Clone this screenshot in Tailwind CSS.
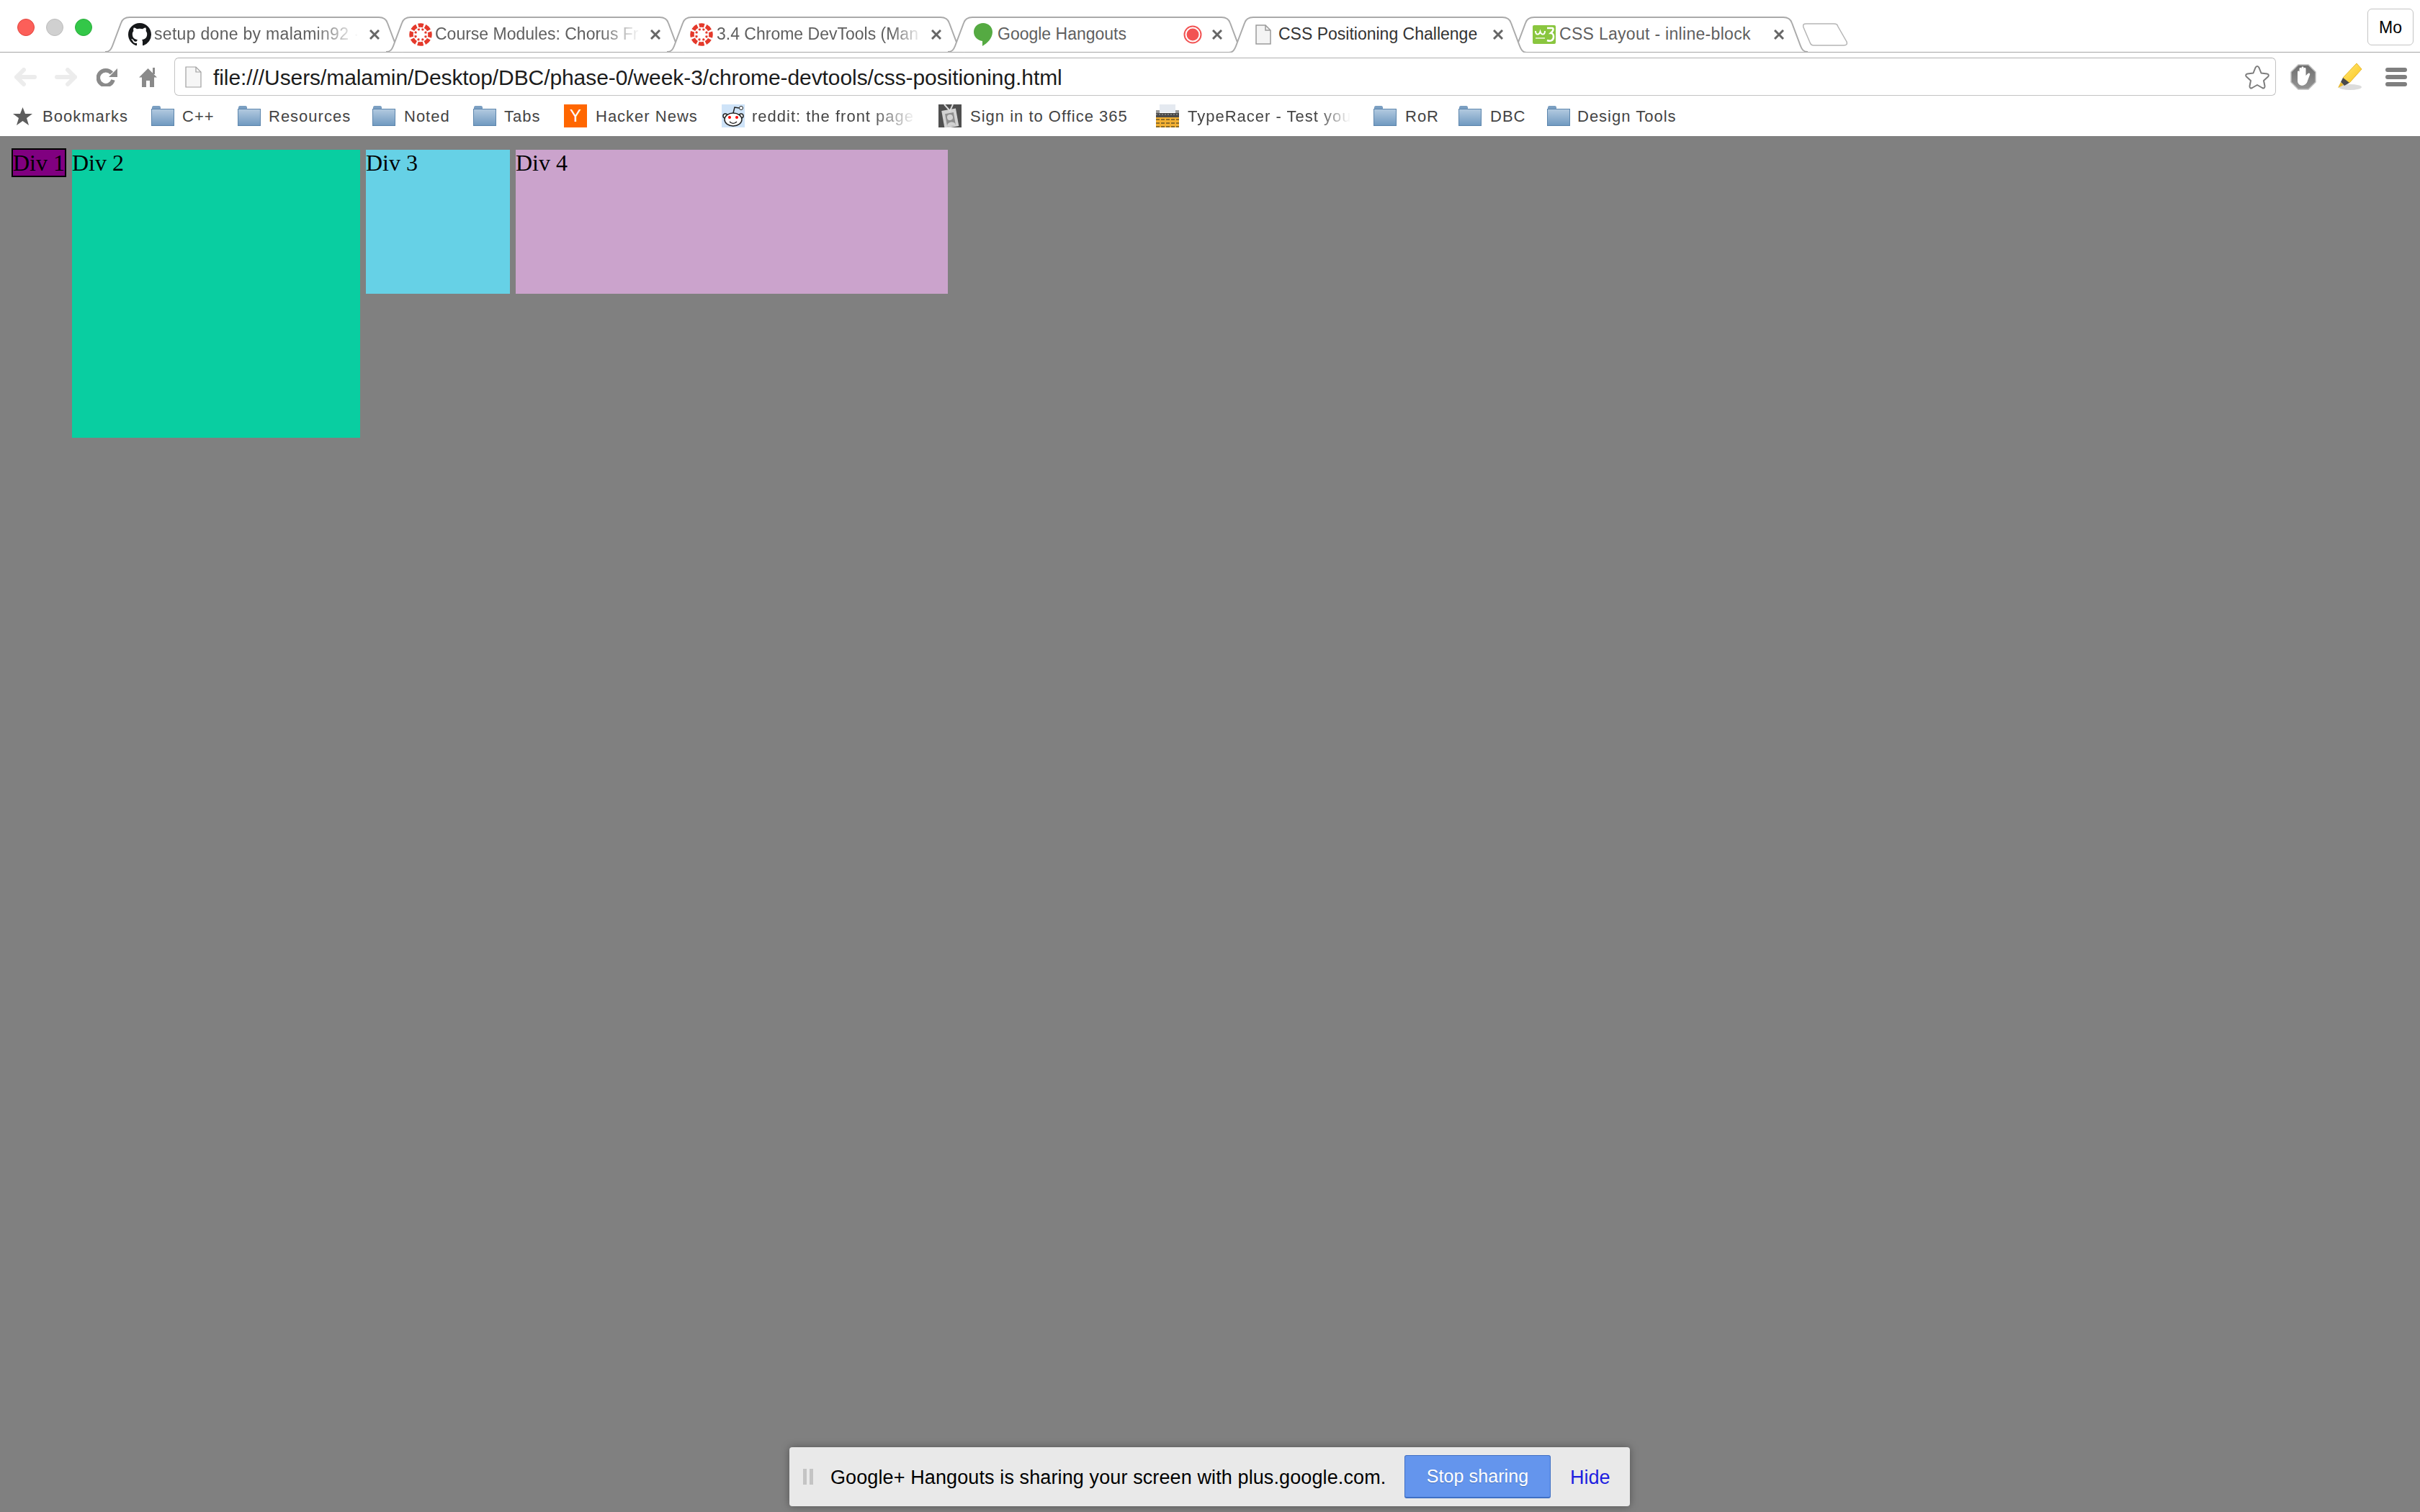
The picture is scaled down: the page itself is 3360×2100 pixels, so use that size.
<!DOCTYPE html>
<html lang="en">
<head>
  <meta charset="UTF-8" />
  <title>CSS Positioning Challenge</title>
  <script src="https://cdn.jsdelivr.net/npm/@tailwindcss/browser@4"></script>
</head>
<body class="bg-[#808080] w-[3360px] h-[2100px] overflow-hidden relative font-['Liberation_Sans',sans-serif]">

  <svg width="0" height="0" class="absolute">
    <defs>
      <linearGradient id="folder" x1="0" y1="0" x2="0" y2="1"><stop offset="0" stop-color="#b3cae0"/><stop offset="1" stop-color="#6f99c0"/></linearGradient>
      <linearGradient id="shield" x1="0" y1="0" x2="0" y2="1"><stop offset="0" stop-color="#6e6e6e"/><stop offset="1" stop-color="#959595"/></linearGradient>
      <linearGradient id="marker" x1="0" y1="0" x2="1" y2="1"><stop offset="0" stop-color="#ffe873"/><stop offset="1" stop-color="#fbc51f"/></linearGradient>
    </defs>
  </svg>

  <!-- tab strip -->
  <header class="h-[73px] bg-white border-b border-[#a6a6a6] flex relative">
    <div class="absolute left-[24px] top-[26px] flex gap-[16px]">
      <span class="size-[24px] rounded-full bg-[#fc5f59] border border-[#e2463f]"></span>
      <span class="size-[24px] rounded-full bg-[#d0d0d0] border border-[#bcbcbc]"></span>
      <span class="size-[24px] rounded-full bg-[#33c748] border border-[#2aac3c]"></span>
    </div>

    <div class="flex pl-[146px] pt-[23px] h-[73px] text-[23px] text-[#5f5f5f]">
      <!-- tab 1 -->
      <div class="relative w-[414px] h-[50px] -mr-[24px]">
        <svg class="absolute inset-0" width="414" height="50" fill="white" stroke="#aaa" stroke-width="2"><path d="M0 49C6 49 8 46 10 41L22 9C24 3 28 1 34 1H380C386 1 390 3 392 9L404 41C406 46 408 49 414 49"/></svg>
        <div class="relative flex items-center h-[49px] pl-[32px] pr-[33px]">
          <svg class="w-[32px] h-[32px] shrink-0" viewBox="0 0 16 16" fill="#16181a"><path d="M8 0C3.58 0 0 3.58 0 8c0 3.54 2.29 6.53 5.47 7.59.4.07.55-.17.55-.38v-1.34c-2.23.48-2.7-1.07-2.7-1.07-.36-.92-.89-1.17-.89-1.17-.73-.5.05-.49.05-.49.8.06 1.23.82 1.23.82.71 1.22 1.87.87 2.33.66.07-.52.28-.87.5-1.07-1.78-.2-3.64-.89-3.64-3.95 0-.87.31-1.59.82-2.15-.08-.2-.36-1.02.08-2.12 0 0 .67-.21 2.2.82A7.7 7.7 0 0 1 8 3.87c.68 0 1.36.09 2 .27 1.53-1.04 2.2-.82 2.2-.82.44 1.1.16 1.92.08 2.12.51.56.82 1.27.82 2.15 0 3.07-1.87 3.75-3.65 3.95.29.25.54.73.54 1.48v2.19c0 .21.15.46.55.38A8 8 0 0 0 16 8c0-4.42-3.58-8-8-8z"/></svg>
          <span class="ml-[4px] w-[284px] tracking-[0.3px] whitespace-nowrap overflow-hidden [mask-image:linear-gradient(to_right,black_78%,transparent)]">setup done by malamin92 · Pull</span>
          <svg class="ml-auto shrink-0" width="14" height="14" stroke="#666" stroke-width="3"><path d="M1 1L13 13M13 1L1 13"/></svg>
        </div>
      </div>
      <!-- tab 2 -->
      <div class="relative w-[414px] h-[50px] -mr-[24px]">
        <svg class="absolute inset-0" width="414" height="50" fill="white" stroke="#aaa" stroke-width="2"><path d="M0 49C6 49 8 46 10 41L22 9C24 3 28 1 34 1H380C386 1 390 3 392 9L404 41C406 46 408 49 414 49"/></svg>
        <div class="relative flex items-center h-[49px] pl-[32px] pr-[33px]">
          <svg class="w-[32px] h-[32px] shrink-0 -rotate-90" viewBox="0 0 32 32" fill="none" stroke="#e4392b"><circle cx="16" cy="16" r="13" stroke-width="5.500" stroke-dasharray="7.700 2.510" stroke-dashoffset="3.850"/><circle cx="16" cy="16" r="7.500" stroke-width="3" stroke-dasharray="2.800 3.090" stroke-dashoffset="-1.500"/></svg>
          <span class="ml-[4px] w-[286px] whitespace-nowrap overflow-hidden [mask-image:linear-gradient(to_right,black_80%,transparent)]">Course Modules: Chorus Fr</span>
          <svg class="ml-auto shrink-0" width="14" height="14" stroke="#666" stroke-width="3"><path d="M1 1L13 13M13 1L1 13"/></svg>
        </div>
      </div>
      <!-- tab 3 -->
      <div class="relative w-[414px] h-[50px] -mr-[24px]">
        <svg class="absolute inset-0" width="414" height="50" fill="white" stroke="#aaa" stroke-width="2"><path d="M0 49C6 49 8 46 10 41L22 9C24 3 28 1 34 1H380C386 1 390 3 392 9L404 41C406 46 408 49 414 49"/></svg>
        <div class="relative flex items-center h-[49px] pl-[32px] pr-[33px]">
          <svg class="w-[32px] h-[32px] shrink-0 -rotate-90" viewBox="0 0 32 32" fill="none" stroke="#e4392b"><circle cx="16" cy="16" r="13" stroke-width="5.500" stroke-dasharray="7.700 2.510" stroke-dashoffset="3.850"/><circle cx="16" cy="16" r="7.500" stroke-width="3" stroke-dasharray="2.800 3.090" stroke-dashoffset="-1.500"/></svg>
          <span class="ml-[5px] w-[286px] whitespace-nowrap overflow-hidden [mask-image:linear-gradient(to_right,black_85%,transparent)]">3.4 Chrome DevTools (Man</span>
          <svg class="ml-auto shrink-0" width="14" height="14" stroke="#666" stroke-width="3"><path d="M1 1L13 13M13 1L1 13"/></svg>
        </div>
      </div>
      <!-- tab 4 -->
      <div class="relative w-[414px] h-[50px] -mr-[24px]">
        <svg class="absolute inset-0" width="414" height="50" fill="white" stroke="#aaa" stroke-width="2"><path d="M0 49C6 49 8 46 10 41L22 9C24 3 28 1 34 1H380C386 1 390 3 392 9L404 41C406 46 408 49 414 49"/></svg>
        <div class="relative flex items-center h-[49px] pl-[36px] pr-[33px]">
          <svg class="w-[26px] h-[32px] shrink-0" viewBox="0 0 26 32" fill="#55aa42"><path d="M13 0C6 0 0 5 0 12.500C0 19 5 24 12 25V32C19 28 26 21 26 12.500C26 5 20 0 13 0Z"/></svg>
          <span class="ml-[7px] whitespace-nowrap">Google Hangouts</span>
          <svg class="ml-auto shrink-0" width="26" height="26"><circle cx="13" cy="13" r="11.500" fill="white" stroke="#f25353" stroke-width="2"/><circle cx="13" cy="13" r="8.500" fill="#f25353"/></svg>
          <svg class="ml-[14px] shrink-0" width="14" height="14" stroke="#666" stroke-width="3"><path d="M1 1L13 13M13 1L1 13"/></svg>
        </div>
      </div>
      <!-- tab 5, active -->
      <div class="relative z-10 w-[414px] h-[50px] -mr-[24px]">
        <svg class="absolute inset-0" width="414" height="50" fill="white" stroke="#aaa" stroke-width="2"><path d="M0 50C6 50 8 46 10 41L22 9C24 3 28 1 34 1H380C386 1 390 3 392 9L404 41C406 46 408 50 414 50"/></svg>
        <div class="relative flex items-center h-[49px] pl-[37px] pr-[33px] text-[#333]">
          <svg class="shrink-0" width="22" height="28" viewBox="0 0 22 28" fill="#f4f4f4" stroke="#9a9a9a" stroke-width="1.500"><path d="M1 1H14L21 8V27H1Z"/><path d="M14 1V8H21" fill="none"/></svg>
          <span class="ml-[10px] whitespace-nowrap">CSS Positioning Challenge</span>
          <svg class="ml-auto shrink-0" width="14" height="14" stroke="#666" stroke-width="3"><path d="M1 1L13 13M13 1L1 13"/></svg>
        </div>
      </div>
      <!-- tab 6 -->
      <div class="relative w-[414px] h-[50px]">
        <svg class="absolute inset-0" width="414" height="50" fill="white" stroke="#aaa" stroke-width="2"><path d="M0 49C6 49 8 46 10 41L22 9C24 3 28 1 34 1H380C386 1 390 3 392 9L404 41C406 46 408 49 414 49"/></svg>
        <div class="relative flex items-center h-[49px] pl-[32px] pr-[33px]">
          <svg class="shrink-0" width="32" height="26" viewBox="0 0 32 26"><rect width="32" height="26" rx="2" fill="#8ac63f"/><path d="M4 8C4 14 9 14 10.500 9C12 14 17 14 17 8" fill="none" stroke="white" stroke-width="2"/><path d="M20 4H27C29 4 29 7 27 9L25 11C28 11 29 14 29 16C29 21 25 23 20 21" fill="none" stroke="white" stroke-width="2.500"/><rect x="4" y="17" width="13" height="2" fill="#d6ecb6"/></svg>
          <span class="ml-[5px] tracking-[0.3px] whitespace-nowrap">CSS Layout - inline-block</span>
          <svg class="ml-auto shrink-0" width="14" height="14" stroke="#666" stroke-width="3"><path d="M1 1L13 13M13 1L1 13"/></svg>
        </div>
      </div>
      <!-- new tab button -->
      <svg class="-ml-[8px] mt-[9px] shrink-0" width="64" height="32" fill="white" stroke="#b5b5b5" stroke-width="1.500"><path d="M6 1H44C48 1 49 2 50 5L62 26C63 29 62 31 58 31H16C13 31 12 30 11 27L2 6C1 2 2 1 6 1Z"/></svg>
    </div>

    <div class="absolute left-[3287px] top-[12px] w-[64px] h-[51px] pt-[2px] bg-white border border-[#c4c4c4] rounded-[6px] flex items-center justify-center text-[23px] text-black">Mo</div>
  </header>

  <!-- toolbar -->
  <div class="h-[60px] bg-white flex items-center relative">
    <svg class="ml-[20px] mt-[8px] shrink-0" width="31" height="26" viewBox="0 0 31 26" fill="none" stroke="#ececec" stroke-width="6" stroke-linecap="round" stroke-linejoin="round"><path d="M13 3L3 13L13 23M3 13H28"/></svg>
    <svg class="ml-[25px] mt-[8px] shrink-0" width="31" height="26" viewBox="0 0 31 26" fill="none" stroke="#ececec" stroke-width="6" stroke-linecap="round" stroke-linejoin="round"><path d="M18 3L28 13L18 23M28 13H3"/></svg>
    <svg class="ml-[27px] mt-[8px] shrink-0" width="29" height="26" viewBox="0 0 29 26" fill="none"><path d="M21 7.500A10.500 10.500 0 1 0 23 17" stroke="#8a8a8a" stroke-width="5.500"/><path d="M29 1V13H17Z" fill="#8a8a8a"/></svg>
    <svg class="ml-[30px] mt-[8px] shrink-0" width="25" height="27" viewBox="0 0 25 27" fill="#8a8a8a"><path d="M12.500 1L25 13.500H21V27H15V18H10V27H4V13.500H0Z"/><rect x="19" y="0" width="3" height="9"/></svg>
    <!-- omnibox -->
    <div class="ml-[24px] w-[2918px] h-[53px] mt-[7px] border border-[#c4c4c4] border-t-[#b0b0b0] rounded-[6px] flex items-center pl-[14px] pr-[7px]">
      <svg class="shrink-0" width="23" height="30" viewBox="0 0 23 30" fill="#f6f6f6" stroke="#a0a0a0" stroke-width="1.200"><path d="M1 1H15L22 8V29H1Z"/><path d="M15 1V8H22" fill="none"/></svg>
      <span class="ml-[16px] pt-[1px] text-[30px] tracking-[-0.08px] text-[#1c1c1c] whitespace-nowrap">file:///Users/malamin/Desktop/DBC/phase-0/week-3/chrome-devtools/css-positioning.html</span>
      <svg class="ml-auto shrink-0" width="36" height="34" viewBox="0 0 36 34" fill="white" stroke="#7c7c7c" stroke-width="2" stroke-linejoin="round"><path d="M18 2C19 2 20 3 20.500 4L23.500 11.500L31.500 12.500C34 13 34.500 15 33 16.500L27 22L28.500 29.500C29 32 27 33 25 32L18 28L11 32C9 33 7 32 7.500 29.500L9 22L3 16.500C1.500 15 2 13 4.500 12.500L12.500 11.500L15.500 4C16 3 17 2 18 2Z"/></svg>
    </div>
    <svg class="ml-[20px] mt-[8px] shrink-0" width="36" height="36" viewBox="0 0 36 36"><path d="M11 1H25L35 11V25L25 35H11L1 25V11Z" fill="url(#shield)" stroke="#bdbdbd" stroke-width="1.500"/><path d="M10 18V11C10 9 12.500 9 12.500 11V6.500C12.500 4.500 15.500 4.500 15.500 6.500V5C15.500 3 18.500 3 18.500 5V6.500C18.500 4.500 21.500 4.500 21.500 6.500V16L24.500 13C26 11.500 28 13 27 15L24 23C22 32 10 32 10 23Z" fill="white"/></svg>
    <svg class="ml-[28px] mt-[8px] shrink-0" width="36" height="38" viewBox="0 0 36 38"><ellipse cx="19" cy="33" rx="16" ry="4" fill="#dcdcdc"/><path d="M28 0L35 8L18 27L9 20Z" fill="url(#marker)" stroke="#e8b82a"/><path d="M9 20L18 27L11 31L6 26Z" fill="#4a4a4a"/><path d="M6 26L10 30L2 34Z" fill="#e8b82a"/></svg>
    <div class="ml-[32px] mt-[8px] flex flex-col gap-[4px]">
      <span class="block w-[30px] h-[6px] rounded-full bg-[#7f7f7f]"></span>
      <span class="block w-[30px] h-[6px] rounded-full bg-[#7f7f7f]"></span>
      <span class="block w-[30px] h-[6px] rounded-full bg-[#7f7f7f]"></span>
    </div>
  </div>

  <!-- bookmarks bar -->
  <nav class="h-[56px] bg-white flex items-center pl-[18px] text-[22px] text-[#444] whitespace-nowrap tracking-[1px]">
    <svg class="shrink-0" width="27" height="25" viewBox="0 0 27 25" fill="#5d5d5d"><path d="M13.500 0L17 9H27L19 15L22 25L13.500 19L5 25L8 15L0 9H10Z"/></svg>
    <span class="ml-[14px] w-[117px]">Bookmarks</span>

    <svg class="ml-[34px] shrink-0" width="32" height="28" viewBox="0 0 32 28"><path d="M1 4V2C1 1 2 0 3 0H11C12 0 13 1 13 2V4H31C32 4 32 5 32 5V27H0V5C0 5 0 4 1 4Z" fill="#7b9fc2"/><rect x="0.500" y="4.500" width="31" height="23" fill="url(#folder)" stroke="#5d86ad"/></svg>
    <span class="ml-[11px] w-[44px]">C++</span>

    <svg class="ml-[33px] shrink-0" width="32" height="28" viewBox="0 0 32 28"><path d="M1 4V2C1 1 2 0 3 0H11C12 0 13 1 13 2V4H31C32 4 32 5 32 5V27H0V5C0 5 0 4 1 4Z" fill="#7b9fc2"/><rect x="0.500" y="4.500" width="31" height="23" fill="url(#folder)" stroke="#5d86ad"/></svg>
    <span class="ml-[11px] w-[111px]">Resources</span>

    <svg class="ml-[33px] shrink-0" width="32" height="28" viewBox="0 0 32 28"><path d="M1 4V2C1 1 2 0 3 0H11C12 0 13 1 13 2V4H31C32 4 32 5 32 5V27H0V5C0 5 0 4 1 4Z" fill="#7b9fc2"/><rect x="0.500" y="4.500" width="31" height="23" fill="url(#folder)" stroke="#5d86ad"/></svg>
    <span class="ml-[12px] w-[63px]">Noted</span>

    <svg class="ml-[33px] shrink-0" width="32" height="28" viewBox="0 0 32 28"><path d="M1 4V2C1 1 2 0 3 0H11C12 0 13 1 13 2V4H31C32 4 32 5 32 5V27H0V5C0 5 0 4 1 4Z" fill="#7b9fc2"/><rect x="0.500" y="4.500" width="31" height="23" fill="url(#folder)" stroke="#5d86ad"/></svg>
    <span class="ml-[11px] w-[51px]">Tabs</span>

    <span class="ml-[32px] shrink-0 w-[32px] h-[32px] bg-[#ff6600] text-white text-[24px] tracking-normal flex items-center justify-center">Y</span>
    <span class="ml-[12px] w-[140px]">Hacker News</span>

    <svg class="ml-[35px] shrink-0" width="32" height="32" viewBox="0 0 32 32"><rect width="32" height="32" fill="#cee3f8"/><circle cx="5" cy="16" r="3" fill="white" stroke="#222" stroke-width="1.500"/><circle cx="27" cy="16" r="3" fill="white" stroke="#222" stroke-width="1.500"/><ellipse cx="16" cy="21" rx="12" ry="9" fill="white" stroke="#222" stroke-width="1.500"/><circle cx="11" cy="18" r="2" fill="#f00"/><circle cx="21" cy="18" r="2" fill="#f00"/><path d="M11 24C14 27 18 27 21 24" fill="none" stroke="#222" stroke-width="1.500"/><path d="M16 12L18 4L24 5" fill="none" stroke="#222" stroke-width="1.500"/><circle cx="27" cy="5" r="2.500" fill="white" stroke="#222"/></svg>
    <span class="ml-[10px] w-[229px] overflow-hidden [mask-image:linear-gradient(to_right,black_72%,transparent)]">reddit: the front page of the</span>

    <svg class="ml-[30px] shrink-0" width="32" height="32" viewBox="0 0 32 32"><rect width="32" height="32" fill="#4f4f4f"/><g transform="rotate(-10 16 18)"><rect x="6" y="7" width="20" height="25" fill="#d2d2d2"/><rect x="10" y="12" width="12" height="18" fill="#8f8f8f"/><circle cx="16" cy="18" r="4" fill="#d2d2d2"/><path d="M10 30C10 23 22 23 22 30Z" fill="#d2d2d2"/></g><path d="M8 0L16 9L20 0" fill="none" stroke="#ddd" stroke-width="2"/></svg>
    <span class="ml-[12px] w-[223px]">Sign in to Office 365</span>

    <svg class="ml-[35px] shrink-0" width="32" height="32" viewBox="0 0 32 32"><rect x="5" width="22" height="11" fill="#e4e9f0"/><rect y="8" width="5" height="4" fill="#9a9a9a"/><rect x="27" y="8" width="5" height="4" fill="#9a9a9a"/><rect y="12" width="32" height="6" fill="#4a4a4a"/><path d="M0 14H32" stroke="#aaa" stroke-dasharray="2 2"/><rect y="18" width="32" height="14" fill="#f2b033"/><path d="M0 21H32M0 26H32M0 31H32" stroke="#6b5424" stroke-width="1.500" stroke-dasharray="5 2"/></svg>
    <span class="ml-[12px] w-[226px] overflow-hidden [mask-image:linear-gradient(to_right,black_80%,transparent)]">TypeRacer - Test your</span>

    <svg class="ml-[32px] shrink-0" width="32" height="28" viewBox="0 0 32 28"><path d="M1 4V2C1 1 2 0 3 0H11C12 0 13 1 13 2V4H31C32 4 32 5 32 5V27H0V5C0 5 0 4 1 4Z" fill="#7b9fc2"/><rect x="0.500" y="4.500" width="31" height="23" fill="url(#folder)" stroke="#5d86ad"/></svg>
    <span class="ml-[12px] w-[41px]">RoR</span>

    <svg class="ml-[33px] shrink-0" width="32" height="28" viewBox="0 0 32 28"><path d="M1 4V2C1 1 2 0 3 0H11C12 0 13 1 13 2V4H31C32 4 32 5 32 5V27H0V5C0 5 0 4 1 4Z" fill="#7b9fc2"/><rect x="0.500" y="4.500" width="31" height="23" fill="url(#folder)" stroke="#5d86ad"/></svg>
    <span class="ml-[12px] w-[45px]">DBC</span>

    <svg class="ml-[34px] shrink-0" width="32" height="28" viewBox="0 0 32 28"><path d="M1 4V2C1 1 2 0 3 0H11C12 0 13 1 13 2V4H31C32 4 32 5 32 5V27H0V5C0 5 0 4 1 4Z" fill="#7b9fc2"/><rect x="0.500" y="4.500" width="31" height="23" fill="url(#folder)" stroke="#5d86ad"/></svg>
    <span class="ml-[10px] w-[139px]">Design Tools</span>
  </nav>

  <!-- page content -->
  <main class="flex items-baseline gap-[8px] pl-[16px] pt-[17px] font-['Liberation_Serif',serif] text-[32px] leading-[36px] text-black">
    <div class="border-2 border-black bg-[#800080]">Div 1</div>
    <div class="w-[400px] h-[400px] bg-[#09cea1]">Div 2</div>
    <div class="w-[200px] h-[200px] bg-[#66d1e6]">Div 3</div>
    <div class="w-[600px] h-[200px] bg-[#cba3cc]">Div 4</div>
  </main>

  <!-- screen share notification -->
  <div class="absolute left-[1096px] top-[2010px] w-[1167px] h-[82px] bg-[#e9e9e9] rounded-[4px] shadow-[0_0_12px_rgba(0,0,0,0.35)] flex items-center pl-[19px] pr-[27px] text-[27px] text-black">
    <div class="flex gap-[4px] h-[22px]">
      <span class="block w-[5px] bg-[#c4c4c4]"></span>
      <span class="block w-[5px] bg-[#c4c4c4]"></span>
    </div>
    <span class="ml-[24px] mt-[2px] tracking-[0.11px] whitespace-nowrap">Google+ Hangouts is sharing your screen with plus.google.com.</span>
    <button class="ml-auto w-[203px] h-[60px] bg-[#6495ed] border border-[#3f6fc4] border-b-2 rounded-[3px] text-white text-[25px] tracking-[0.1px] [text-shadow:0_1px_0_rgba(0,0,0,0.25)]">Stop sharing</button>
    <span class="ml-[27px] mt-[2px] w-[56px] text-[#1f1fe0] whitespace-nowrap">Hide</span>
  </div>
</body>
</html>
